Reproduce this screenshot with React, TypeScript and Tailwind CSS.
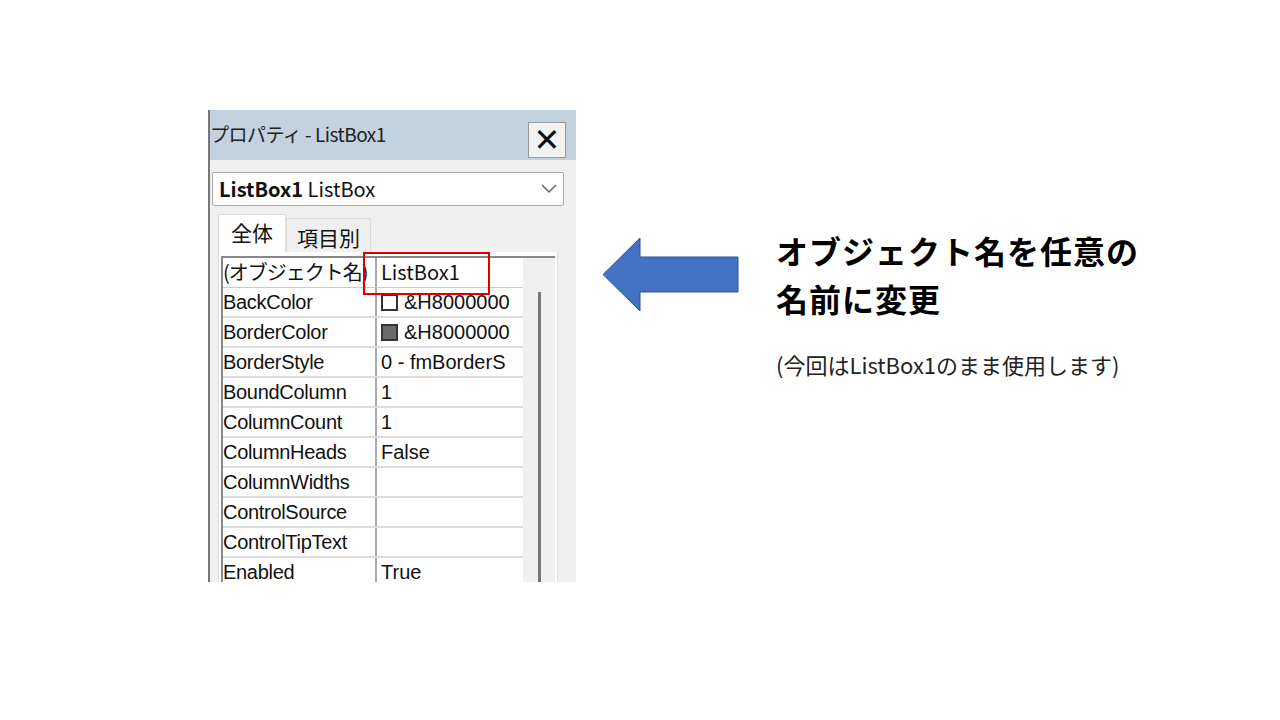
import React from "react";

const rows: [string, React.ReactNode][] = [
  ["BackColor", <span className="flex items-center gap-[6px]"><span className="inline-block w-[17px] h-[17px] border-2 border-[#333] bg-white" />&H8000000</span>],
  ["BorderColor", <span className="flex items-center gap-[6px]"><span className="inline-block w-[17px] h-[17px] border-2 border-[#333] bg-[#6b6b6b]" />&H8000000</span>],
  ["BorderStyle", "0 - fmBorderS"],
  ["BoundColumn", "1"],
  ["ColumnCount", "1"],
  ["ColumnHeads", "False"],
  ["ColumnWidths", ""],
  ["ControlSource", ""],
  ["ControlTipText", ""],
  ["Enabled", "True"],
];

export default function App() {
  const jp = { fontFamily: '"Noto Sans CJK JP", "Noto Sans", sans-serif' };
  return (
    <div className="w-[1280px] h-[720px] bg-white flex" style={jp}>
      <div className="ml-[208px] mt-[110px] w-[368px] h-[472px] overflow-hidden bg-[#f0f0f0] border-l-2 border-[#777] flex flex-col text-[#111]">
        <div className="h-[50px] bg-[#c4d1df] flex items-start justify-between pr-[10px] shrink-0">
          <span className="mt-[10px] text-[19px] tracking-[-0.5px] text-[#222]">プロパティ - ListBox1</span>
          <div className="mt-[12px] w-[38px] h-[36px] bg-[#f2f2f2] border border-[#999] flex items-center justify-center text-[32px] font-bold leading-none" style={{ fontFamily: '"DejaVu Sans", sans-serif' }}>✕</div>
        </div>
        <div className="mt-[12px] mx-[2px] mr-[12px] h-[34px] bg-white border border-[#aaa] rounded-[2px] flex items-center justify-between px-[6px] shrink-0">
          <span className="text-[20px]"><b>ListBox1</b> ListBox</span>
          <svg width="16" height="10" viewBox="0 0 16 10"><path d="M1 1l7 7 7-7" fill="none" stroke="#666" strokeWidth="1.5" /></svg>
        </div>
        <div className="flex mt-[8px] ml-[8px] h-[38px] items-end shrink-0">
          <div className="h-[38px] px-[12px] bg-white border border-[#ddd] border-b-0 text-[21px] leading-[34px]">全体</div>
          <div className="h-[34px] px-[10px] bg-[#f0f0f0] border border-[#ddd] border-b-0 text-[21px] leading-[36px]">項目別</div>
        </div>
        <div className="ml-[8px] mr-[18px] bg-white border-x border-[#ddd] pt-[4px] px-[2px] flex-1">
          <div className="border-2 border-[#888] border-r-0 flex">
            <div className="w-[300px]">
              <div className="flex h-[30px] border-b border-[#ccc]">
                <div className="w-[154px] border-r-2 border-[#aaa] text-[20px] leading-[28px] whitespace-nowrap overflow-hidden tracking-[-1px]">(オブジェクト名)</div>
                <div className="flex-1 pl-[4px] text-[20px] leading-[28px]">ListBox1</div>
              </div>
              {rows.map(([k, v]) => (
                <div key={k} className="flex h-[30px] border-b-2 border-[#ddd]">
                  <div className="w-[154px] border-r-2 border-[#aaa] text-[20px] leading-[28px] whitespace-nowrap overflow-hidden tracking-[-0.3px]" style={{ fontFamily: '"Liberation Sans", sans-serif' }}>{k}</div>
                  <div className="flex-1 pl-[4px] text-[20px] leading-[28px] whitespace-nowrap overflow-hidden" style={{ fontFamily: '"Liberation Sans", sans-serif' }}>{v}</div>
                </div>
              ))}
            </div>
            <div className="flex-1 bg-[#f0f0f0] flex justify-center pt-[34px]">
              <div className="w-[3px] h-[400px] bg-[#777]" />
            </div>
          </div>
        </div>
      </div>
      <div className="ml-[27px] mt-[238px]">
        <svg width="136" height="73" viewBox="0 0 136 73">
          <path d="M0 36.5L37 0v19h98v35H37v19z" fill="#4472c4" stroke="#2f528f" strokeWidth="1" />
        </svg>
      </div>
      <div className="ml-[37px] mt-[226px]">
        <div className="text-[32px] font-bold leading-[48px] tracking-[1px] text-black">オブジェクト名を任意の<br />名前に変更</div>
        <div className="mt-[26px] text-[22px] text-[#222]">(今回はListBox1のまま使用します)</div>
      </div>
      <div className="hidden" />
      <div style={{ position: "absolute", left: 363, top: 252, width: 127, height: 43 }} className="border-2 border-[#e00000]" />
    </div>
  );
}
